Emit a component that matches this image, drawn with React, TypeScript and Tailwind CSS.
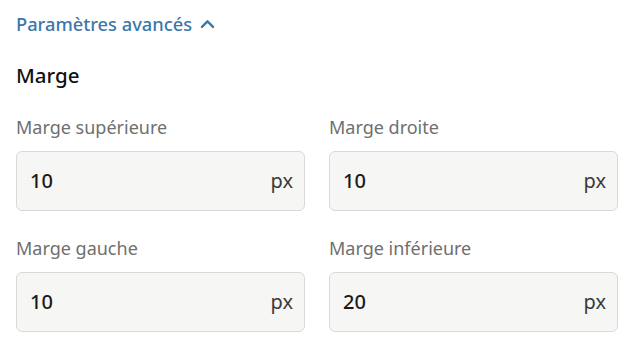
import React from "react";

function Field({ label, value }: { label: string; value: string }) {
  return (
    <div className="flex flex-col">
      <div className="text-[18px] leading-[24px] text-[#6f6f6f] mb-[12px]">{label}</div>
      <div className="h-[60px] rounded-[6px] border border-[#d9d9d6] bg-[#f6f6f4] flex items-center justify-between pl-[13px] pr-[11px]">
        <span className="text-[20px] font-medium text-[#1a1a1a]">{value}</span>
        <span className="text-[20px] text-[#3a3a3a]">px</span>
      </div>
    </div>
  );
}

export default function App() {
  return (
    <div
      className="w-[632px] h-[354px] bg-white pl-4 pr-[14px] pt-[11px]"
      style={{ fontFamily: '"Noto Sans", sans-serif' }}
    >
      <div className="flex items-center gap-[6px] text-[18.3px] font-medium text-[#3c77aa] leading-[26px]">
        <span>Paramètres avancés</span>
        <svg width="19" height="19" viewBox="0 0 24 24" fill="none" stroke="currentColor" strokeWidth="3" strokeLinecap="round" strokeLinejoin="round">
          <path d="M5 15l7-7 7 7" />
        </svg>
      </div>
      <div className="mt-[24px] text-[20.5px] font-medium text-[#111111] leading-[28px]">Marge</div>
      <div className="mt-[26px] grid grid-cols-2 gap-x-6 gap-y-[25px]">
        <Field label="Marge supérieure" value="10" />
        <Field label="Marge droite" value="10" />
        <Field label="Marge gauche" value="10" />
        <Field label="Marge inférieure" value="20" />
      </div>
    </div>
  );
}
